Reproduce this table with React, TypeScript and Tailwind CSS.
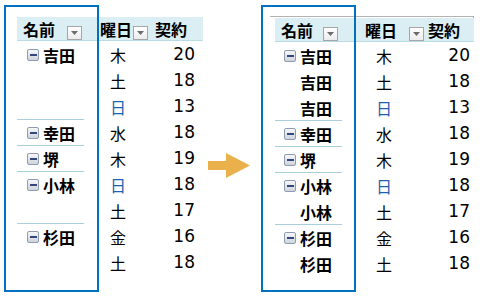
type Row = { name: string; icon: boolean; line: boolean; day: string; n: number };

const before: Row[] = [
  { name: "吉田", icon: true, line: false, day: "木", n: 20 },
  { name: "", icon: false, line: false, day: "土", n: 18 },
  { name: "", icon: false, line: false, day: "日", n: 13 },
  { name: "幸田", icon: true, line: true, day: "水", n: 18 },
  { name: "堺", icon: true, line: true, day: "木", n: 19 },
  { name: "小林", icon: true, line: true, day: "日", n: 18 },
  { name: "", icon: false, line: false, day: "土", n: 17 },
  { name: "杉田", icon: true, line: true, day: "金", n: 16 },
  { name: "", icon: false, line: false, day: "土", n: 18 },
];

// after filling: every row repeats its item label
const after: Row[] = [
  { name: "吉田", icon: true, line: false, day: "木", n: 20 },
  { name: "吉田", icon: false, line: false, day: "土", n: 18 },
  { name: "吉田", icon: false, line: false, day: "日", n: 13 },
  { name: "幸田", icon: true, line: true, day: "水", n: 18 },
  { name: "堺", icon: true, line: true, day: "木", n: 19 },
  { name: "小林", icon: true, line: true, day: "日", n: 18 },
  { name: "小林", icon: false, line: false, day: "土", n: 17 },
  { name: "杉田", icon: true, line: true, day: "金", n: 16 },
  { name: "杉田", icon: false, line: false, day: "土", n: 18 },
];

const jp = "font-['Noto_Sans_CJK_JP',sans-serif]";

const DropButton = () => (
  <div className="flex h-[14px] w-[15px] items-center justify-center border border-[#a6a6a6] bg-gradient-to-b from-white to-[#ececec]">
    <svg width="7" height="4" viewBox="0 0 7 4">
      <path d="M0 0h7L3.5 4z" fill="#6b6b6b" />
    </svg>
  </div>
);

const Collapse = () => (
  <div className="flex h-[12px] w-[12px] items-center justify-center rounded-[2px] border border-[#8e9bb1] bg-gradient-to-b from-[#f6f7f9] to-[#cfd4dc]">
    <div className="h-[2px] w-[7px] bg-[#34477a]" />
  </div>
);

type Cols = {
  name: string;
  day: string;
  num: string;
  namePad: string;
  dropGap: string;
  dayHead: string;
  dayGap: string;
  sumHead: string;
  iconPad: string;
  dayPad: string;
  numPad: string;
};

const Pivot = ({ rows, c }: { rows: Row[]; c: Cols }) => (
  <div className={jp}>
    <div className="flex h-[24px] border-b border-[#b9dbe6] bg-[#daeef3] text-[16px] font-bold leading-none text-black">
      <div className={`flex ${c.name} ${c.namePad} items-center`}>
        <span>名前</span>
        <div className={`${c.dropGap} self-end`}>
          <DropButton />
        </div>
      </div>
      <div className={`flex ${c.day} ${c.dayHead} items-center`}>
        <span>曜日</span>
        <div className={`${c.dayGap} self-end`}>
          <DropButton />
        </div>
      </div>
      <div className={`flex ${c.num} ${c.sumHead} items-center`}>
        <span>契約</span>
      </div>
    </div>
    {rows.map((r, i) => (
      <div key={i} className="flex h-[26px] text-black">
        <div className={`flex ${c.name} flex-col`}>
          <div className={`h-px w-[67px] ${r.line ? "bg-[#a8cfdb]" : "bg-transparent"}`} />
          <div className={`flex h-[25px] items-center ${c.iconPad} text-[16px] font-bold`}>
            <div className="w-[16px]">{r.icon && <Collapse />}</div>
            <span>{r.name}</span>
          </div>
        </div>
        <div className={`flex ${c.day} items-center pt-px ${c.dayPad} text-[16px]`}>
          <span className={r.day === "日" ? "text-[#1d5fb0]" : ""}>{r.day}</span>
        </div>
        <div
          className={`flex ${c.num} items-center justify-end pt-px ${c.numPad} font-['DejaVu_Sans',sans-serif] text-[17px]`}
        >
          {r.n}
        </div>
      </div>
    ))}
  </div>
);

export default function App() {
  return (
    <div className="relative flex h-[297px] w-[484px] items-start overflow-hidden bg-white pt-[16px]">
      <div className="ml-[17px] mt-px">
        <Pivot
          rows={before}
          c={{
            name: "w-[81px]",
            day: "w-[53px]",
            num: "w-[52px]",
            namePad: "pl-[6px]",
            dropGap: "ml-[12px]",
            dayHead: "pl-[2px]",
            dayGap: "ml-px",
            sumHead: "pl-[4px]",
            iconPad: "pl-[10px]",
            dayPad: "pl-[12px]",
            numPad: "pr-[8px]",
          }}
        />
      </div>

      <svg className="ml-[5px] mt-[137px]" width="42" height="25" viewBox="0 0 42 25">
        <path d="M0 8h18V0l24 12.5L18 25v-8H0z" fill="#e9b04b" />
      </svg>

      <div className="ml-[25px]">
        <div className="ml-[-5px] flex">
          <div className="h-px w-[203px] bg-[#b3b3b3]" />
          <div className="h-[2px] w-px bg-[#e0a040]" />
        </div>
        <Pivot
          rows={after}
          c={{
            name: "w-[80px]",
            day: "w-[70px]",
            num: "w-[48px]",
            namePad: "pl-[6px]",
            dropGap: "ml-[10px]",
            dayHead: "pl-[10px]",
            dayGap: "ml-[12px]",
            sumHead: "pl-[3px]",
            iconPad: "pl-[9px]",
            dayPad: "pl-[21px]",
            numPad: "pr-[3px]",
          }}
        />
      </div>

      {/* highlight frames around the name columns */}
      <div className="pointer-events-none absolute left-[4px] top-[5px] h-[287px] w-[95px] border-2 border-[#0070c0]" />
      <div className="pointer-events-none absolute left-[261px] top-[5px] h-[287px] w-[95px] border-2 border-[#0070c0]" />
    </div>
  );
}
